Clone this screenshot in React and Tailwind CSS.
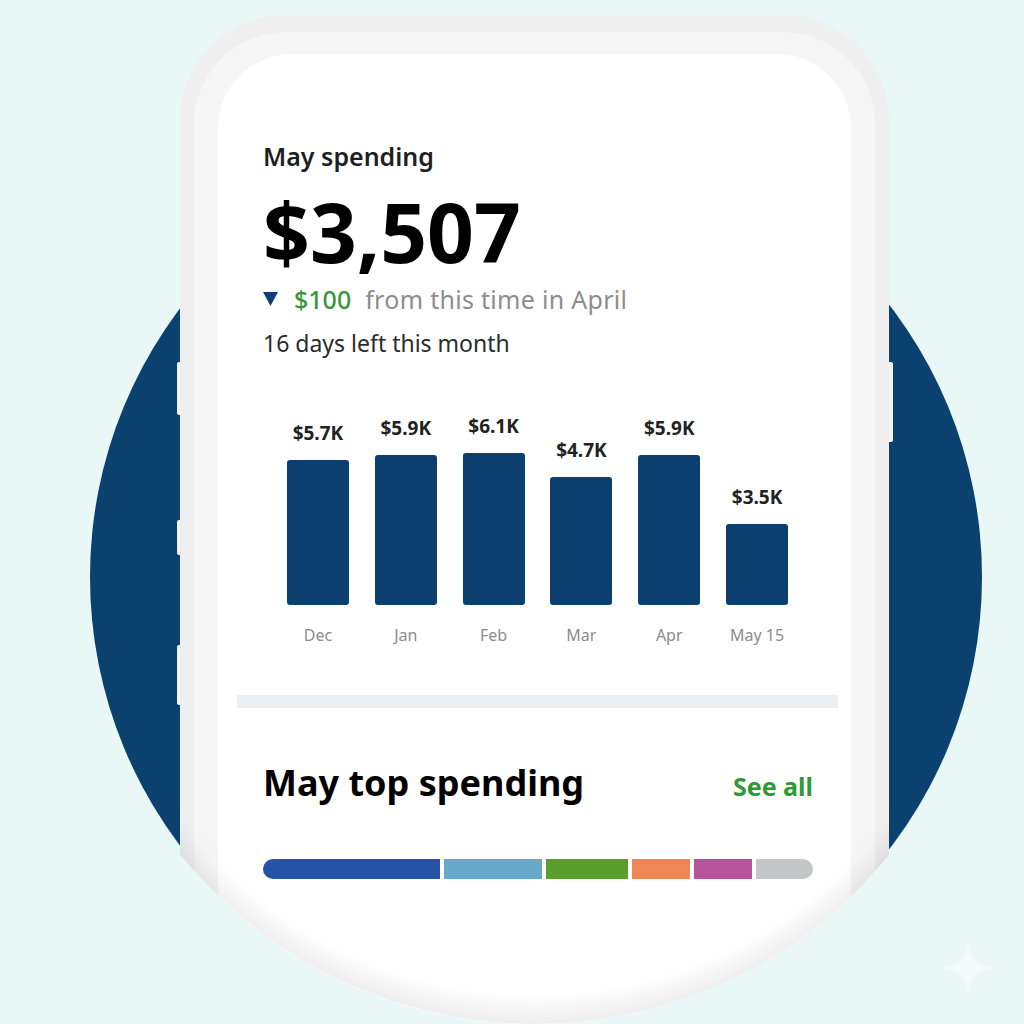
import React from "react";

const bars = [
  { label: "$5.7K", month: "Dec", h: 145 },
  { label: "$5.9K", month: "Jan", h: 150 },
  { label: "$6.1K", month: "Feb", h: 152 },
  { label: "$4.7K", month: "Mar", h: 128 },
  { label: "$5.9K", month: "Apr", h: 150 },
  { label: "$3.5K", month: "May 15", h: 81 },
];

const segments = [
  "w-[177px] bg-[#2553a5]",
  "w-[98px] bg-[#67a8cb]",
  "w-[82px] bg-[#58a02a]",
  "w-[58px] bg-[#ee8753]",
  "w-[58px] bg-[#b6539c]",
  "flex-1 bg-[#c4c7c8]",
];

const SpendingChart = () => (
  <div className="mt-[57px] ml-[11px] mr-[12px] grid grid-cols-6 items-end">
    {bars.map((b) => (
      <div key={b.month} className="flex flex-col items-center">
        <span className="text-[19px] leading-[24px] font-bold text-[#222]">{b.label}</span>
        <div
          className="mt-[15px] w-[62px] rounded-[3px] bg-[#0c3f6f]"
          style={{ height: b.h }}
        />
        <span className="mt-[20px] text-[16px] leading-[20px] text-[#8c8c8c]">{b.month}</span>
      </div>
    ))}
  </div>
);

const App = () => {
  return (
    <div
      className="relative h-[1024px] w-full overflow-hidden bg-[#e9f8f6]"
      style={{ fontFamily: '"Noto Sans", "Open Sans", sans-serif' }}
    >
      {/* backdrop circle */}
      <div className="absolute left-[90px] top-[131px] h-[892px] w-[892px] rounded-full bg-[#0b416f]" />

      {/* side buttons */}
      <div className="absolute left-[177px] top-[362px] h-[53px] w-[4px] rounded-l-[2px] bg-[#f4f4f4]" />
      <div className="absolute left-[177px] top-[520px] h-[35px] w-[4px] rounded-l-[2px] bg-[#f4f4f4]" />
      <div className="absolute left-[177px] top-[645px] h-[60px] w-[4px] rounded-l-[2px] bg-[#f4f4f4]" />
      <div className="absolute left-[888px] top-[362px] h-[80px] w-[5px] rounded-r-[2px] bg-[#f4f4f4]" />

      {/* phone */}
      <div className="relative ml-[180px] mt-[15px] h-[1009px] w-[709px] bg-[#efefef] px-[14px] pt-[17px] [clip-path:path('M0,105_A105,105_0_0_1_105,0_L604,0_A105,105_0_0_1_709,105_L709,840_A456,456_0_0_1_0,840_Z')]">
        <div className="h-full rounded-t-[92px] bg-[#f6f6f6] px-[24px] pt-[22px]">
          <div className="h-full rounded-t-[74px] bg-white pl-[19px] pr-[13px] pt-[86px]">
            <section className="pl-[26px] pr-[25px]">
              <p className="text-[25px] leading-[32px] font-semibold text-[#1f1f1f]">May spending</p>
              <p className="mt-[13px] text-[82px] leading-[92px] font-bold text-black">$3,507</p>
              <div className="mt-[7px] flex items-center text-[25px] leading-[30px]">
                <svg width="15" height="14" viewBox="0 0 15 14" className="mr-[16px]">
                  <path d="M0 0 H15 L7.5 14 Z" fill="#0f3f7a" />
                </svg>
                <span className="font-medium text-[#3b963b]">$100</span>
                <span className="ml-[14px] tracking-[0.3px] text-[#8d8d8d]">from this time in April</span>
              </div>
              <p className="mt-[15px] text-[23px] leading-[28px] text-[#2b2b2b]">16 days left this month</p>
              <SpendingChart />
            </section>

            <div className="mt-[50px] h-[13px] bg-[#eceff2]" />

            <section className="pl-[26px] pr-[25px]">
              <div className="mt-[54px] flex items-baseline justify-between">
                <h2 className="text-[36px] leading-[42px] font-bold text-black">May top spending</h2>
                <a className="text-[25px] font-bold text-[#2f9a35]">See all</a>
              </div>
              <div className="mt-[53px] flex h-[20px] gap-[4px] overflow-hidden rounded-full">
                {segments.map((s) => (
                  <div key={s} className={s} />
                ))}
              </div>
            </section>
          </div>
        </div>
        {/* soft shadow along the rounded bottom only */}
        <div className="pointer-events-none absolute inset-x-0 bottom-0 top-[720px] overflow-hidden">
          <div className="absolute left-[-101px] top-[-623px] h-[912px] w-[912px] rounded-full shadow-[inset_0_-14px_24px_rgba(0,0,0,0.08)]" />
        </div>
      </div>

      {/* sparkle mark */}
      <svg
        width="50"
        height="50"
        viewBox="0 0 50 50"
        className="absolute left-[943px] top-[943px]"
      >
        <path d="M25 0 C27 14 36 23 50 25 C36 27 27 36 25 50 C23 36 14 27 0 25 C14 23 23 14 25 0 Z" fill="#f4fcfb" />
      </svg>
    </div>
  );
};

export default App;
